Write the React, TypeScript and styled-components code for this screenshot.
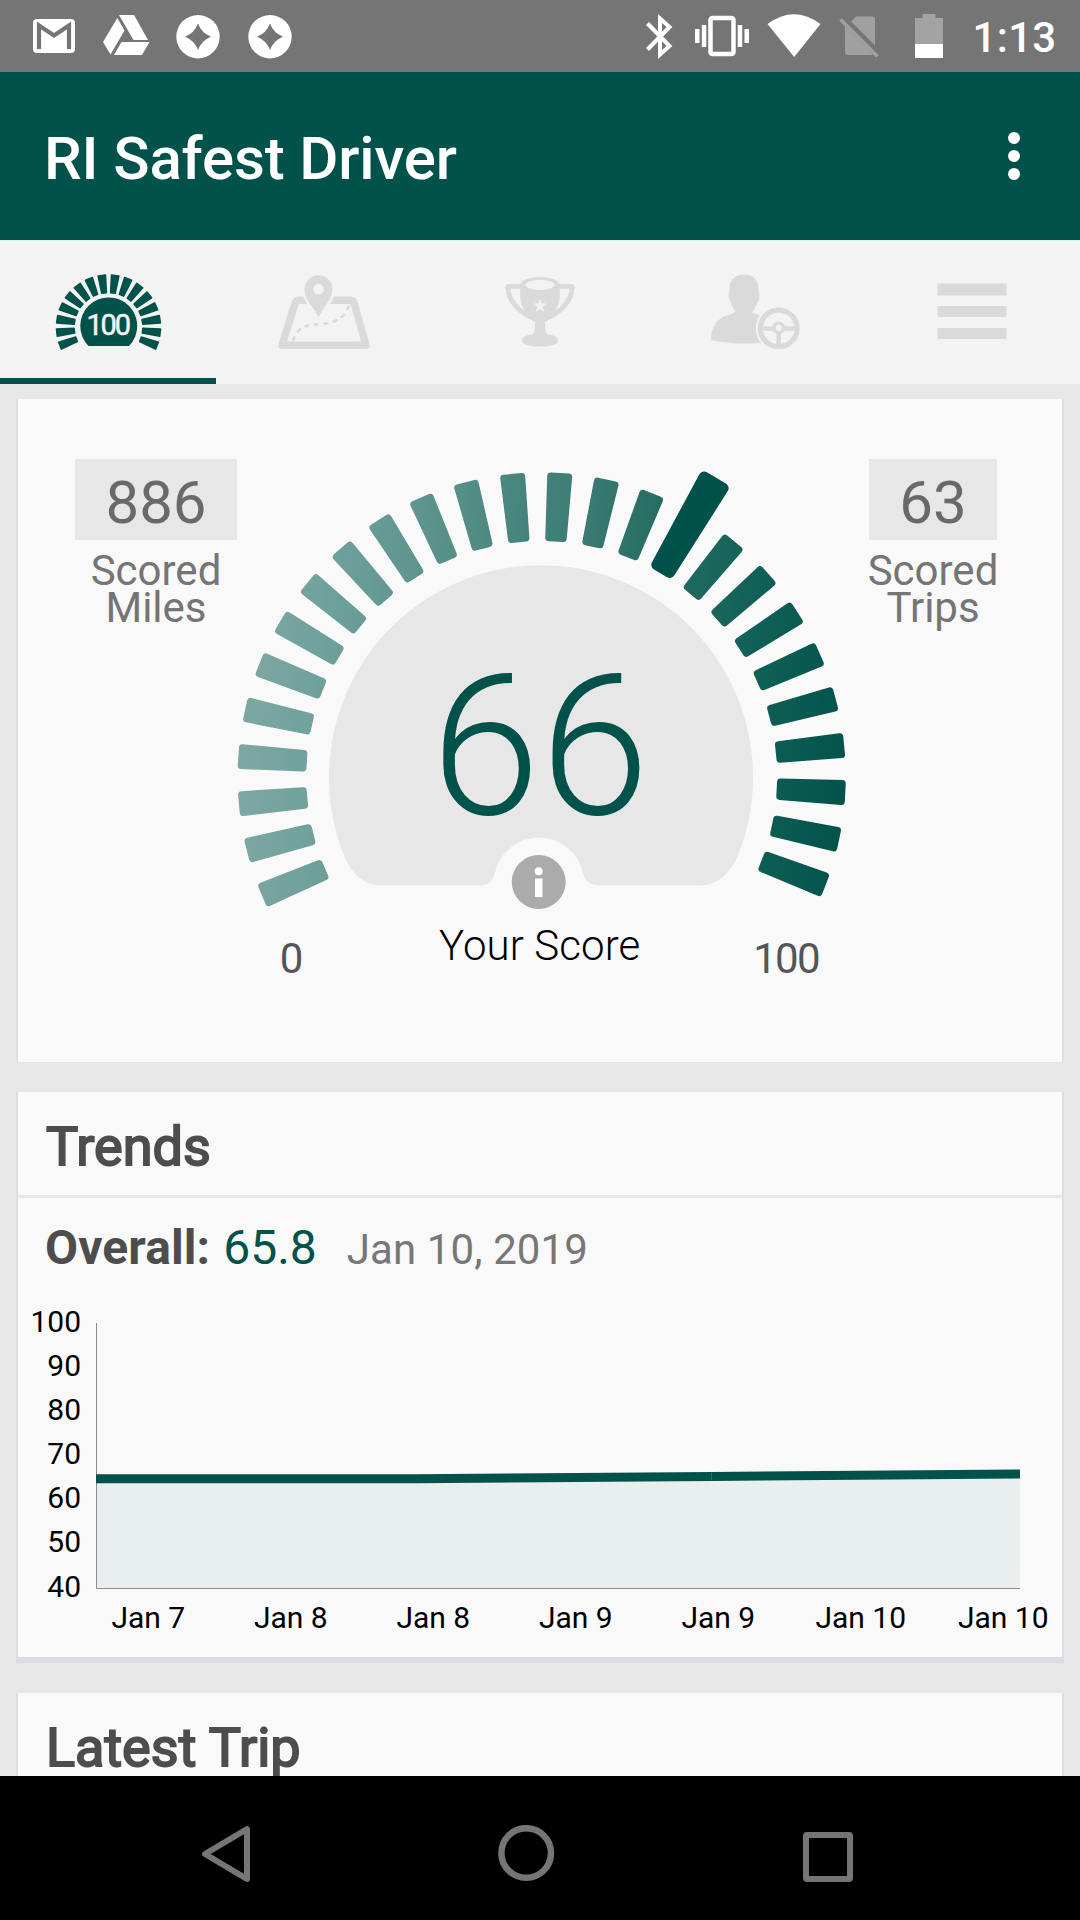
import React from "react";
import styled, { createGlobalStyle } from "styled-components";

const TEAL = "#00524a";
const MUTED = "#dadada";

const GlobalStyle = createGlobalStyle`
  * { box-sizing: border-box; }
  body { margin: 0; background: #e7e7e7; }
`;

const Screen = styled.div`
  width: 1080px;
  height: 1920px;
  display: flex;
  flex-direction: column;
  overflow: hidden;
  background: #e7e7e7;
  font-family: Roboto, "Liberation Sans", sans-serif;
`;

const StatusBar = styled.header`
  flex: none;
  height: 72px;
  display: flex;
  justify-content: space-between;
  background: #757575;
  color: #fff;
`;

const StatusGroup = styled.div<{ $side: "left" | "right" }>`
  display: flex;
  align-items: center;
  gap: ${(p) => (p.$side === "left" ? 24 : 18)}px;
  padding: ${(p) => (p.$side === "left" ? "0 0 0 30px" : "0 23.5px 0 0")};
`;

const Clock = styled.span`
  margin-left: 12px;
  padding-top: 3px;
  font-size: 42px;
  font-weight: 500;
  letter-spacing: 0.3px;
`;

const Glyph = styled.svg<{ $before?: number }>`
  display: block;
  flex: none;
  margin-left: ${(p) => p.$before ?? 0}px;
`;

const AppBar = styled.div`
  flex: none;
  height: 168px;
  display: flex;
  align-items: center;
  justify-content: space-between;
  padding: 0 60px 0 44px;
  background: ${TEAL};
`;

const AppTitle = styled.h1`
  margin: 0;
  padding-top: 5px;
  font-size: 60px;
  line-height: 70px;
  font-weight: 500;
  letter-spacing: -0.15px;
  color: #fff;
`;

const Overflow = styled.div`
  display: flex;
  flex-direction: column;
  gap: 6px;
`;

const Dot = styled.span`
  width: 12px;
  height: 12px;
  border-radius: 50%;
  background: #fff;
`;

const Tabs = styled.nav`
  flex: none;
  height: 144px;
  display: grid;
  grid-template-columns: repeat(5, 1fr);
  border-top: 1px solid #dff5f2;
  background: #f3f3f3;
`;

const Tab = styled.div<{ $active?: boolean }>`
  display: flex;
  border-bottom: 6px solid ${(p) => (p.$active ? TEAL : "transparent")};
`;

const Content = styled.main`
  flex: 1;
  min-height: 0;
  overflow: hidden;
  display: flex;
  flex-direction: column;
  gap: 30px;
  padding: 15px 18px 0;
`;

const Card = styled.section<{ $height: number; $ledge?: boolean }>`
  flex: none;
  height: ${(p) => p.$height}px;
  background: #f9f9f9;
  box-shadow: -2px 0 0 #dedee6, 2px 0 0 #dedee6
    ${(p) => (p.$ledge ? ", 0 6px 0 #dcdce4, -2px 6px 0 #dcdce4, 2px 6px 0 #dcdce4" : "")};
  margin-bottom: ${(p) => (p.$ledge ? 6 : 0)}px;
`;

const ScoreRow = styled.div`
  display: flex;
  justify-content: space-between;
  height: 100%;
  padding: 0 65px 0 57px;
`;

const Stat = styled.div<{ $width: number }>`
  flex: none;
  width: ${(p) => p.$width}px;
  padding-top: 60px;
  display: flex;
  flex-direction: column;
  align-items: center;
`;

const StatValue = styled.div`
  width: 100%;
  height: 81px;
  padding-top: 7px;
  display: flex;
  align-items: center;
  justify-content: center;
  background: #e7e7e7;
  color: #696969;
  font-size: 60px;
  line-height: 70px;
`;

const StatLabel = styled.div`
  width: 132px;
  margin-top: 12px;
  text-align: center;
  color: #757575;
  font-size: 42px;
  line-height: 37px;
`;

const CardTitle = styled.h2`
  margin: 0;
  height: 103px;
  padding: 5px 0 0 28px;
  display: flex;
  align-items: center;
  font-size: 54px;
  font-weight: 400;
  color: #4d4d4d;
  -webkit-text-stroke: 1.9px #4d4d4d;
`;

const TrendBody = styled.div`
  border-top: 3px solid #e7e7ea;
`;

const Summary = styled.div`
  display: flex;
  align-items: baseline;
  margin-top: 20px;
  height: 60px;
  padding-left: 27px;
  line-height: 60px;
`;

const SummaryLabel = styled.span`
  font-size: 48px;
  font-weight: 700;
  letter-spacing: 0.1px;
  color: #4d4d4d;
`;

const SummaryValue = styled.span`
  margin-left: 13px;
  font-size: 48px;
  color: ${TEAL};
`;

const SummaryDate = styled.span`
  margin-left: 30px;
  font-size: 42px;
  letter-spacing: 0.1px;
  color: #777;
`;

const Chart = styled.div`
  display: grid;
  grid-template-columns: 63px 1fr;
  column-gap: 15px;
  margin-top: 22px;
  font-size: 30px;
  color: #000;
`;

const YAxis = styled.div`
  display: flex;
  flex-direction: column;
  text-align: right;
  line-height: 44.1px;
`;

const Plot = styled.svg`
  display: block;
  margin-top: 23px;
`;

const XAxis = styled.div`
  grid-column: 1 / -1;
  display: grid;
  grid-template-columns: repeat(7, 142.5px);
  margin: -8.3px 0 0 59px;
  text-align: center;
  line-height: 36px;
`;

const NavBar = styled.footer`
  flex: none;
  height: 144px;
  display: flex;
  align-items: center;
  justify-content: space-between;
  padding: 14px 224px 0 199px;
  background: #000;
`;

const polar = (cx: number, cy: number, r: number, deg: number, offset: number) => {
  const a = (deg * Math.PI) / 180;
  const x = cx + r * Math.sin(a) + offset * Math.cos(a);
  const y = cy - r * Math.cos(a) + offset * Math.sin(a);
  return `${x.toFixed(2)},${y.toFixed(2)}`;
};

type BarProps = {
  cx: number;
  cy: number;
  angle: number;
  inner: number;
  outer: number;
  innerWidth: number;
  outerWidth: number;
  round: number;
  paint: string;
};

function Bar({ cx, cy, angle, inner, outer, innerWidth, outerWidth, round, paint }: BarProps) {
  const inset = round / 2;
  const wi = innerWidth / 2 - inset;
  const wo = outerWidth / 2 - inset;
  const points = [
    polar(cx, cy, inner + inset, angle, -wi),
    polar(cx, cy, outer - inset, angle, -wo),
    polar(cx, cy, outer - inset, angle, wo),
    polar(cx, cy, inner + inset, angle, wi),
  ].join(" ");
  return <polygon points={points} fill={paint} stroke={paint} strokeWidth={round} strokeLinejoin="round" />;
}

const BAR_COUNT = 26;
const SCORE_BAR = 16;

function Gauge() {
  return (
    <Glyph width="632" height="663" viewBox="237 399 632 663">
      <defs>
        <linearGradient id="sweep" gradientUnits="userSpaceOnUse" x1="238" y1="760" x2="848" y2="800">
          <stop offset="0" stopColor="#7ea7a4" />
          <stop offset="0.13" stopColor="#6fa19b" />
          <stop offset="0.3" stopColor="#5a928b" />
          <stop offset="0.45" stopColor="#44837b" />
          <stop offset="0.53" stopColor="#3c7c74" />
          <stop offset="0.66" stopColor="#266d63" />
          <stop offset="0.8" stopColor="#14635a" />
          <stop offset="1" stopColor="#00524a" />
        </linearGradient>
      </defs>
      {Array.from({ length: BAR_COUNT }, (_, i) => {
        const big = i === SCORE_BAR;
        return (
          <Bar
            key={i}
            cx={541.7}
            cy={776.5}
            angle={-113.1 + i * 8.964}
            inner={235.3}
            outer={big ? 346 : 304}
            innerWidth={big ? 26 : 21.5}
            outerWidth={big ? 33 : 25}
            round={big ? 11 : 7}
            paint={big ? TEAL : "url(#sweep)"}
          />
        );
      })}
      <path
        fill="#e7e7e7"
        d="M345 858 A212 212 0 1 1 737 858 C729 874 717 885 701 885.3 H597 Q586 885 583 873 A45 45 0 0 0 495 873 Q492 885 482 885.3 H380 C364 885 353 875 345 858Z"
      />
      <circle cx="538.7" cy="882" r="27" fill="#ababab" />
      <circle cx="538.7" cy="871.2" r="4" fill="#fff" />
      <rect x="535" y="878.5" width="7.5" height="18.5" fill="#fff" />
      <text x="540" y="813.5" textAnchor="middle" fontSize="197" fontWeight="300" fill={TEAL}>66</text>
      <text x="539.7" y="959.5" textAnchor="middle" fontSize="42" letterSpacing="0.1" fontWeight="300" fill="#000">Your Score</text>
      <text x="291.5" y="973" textAnchor="middle" fontSize="42" fill="#555">0</text>
      <text x="786" y="973" textAnchor="middle" fontSize="42" fill="#555" letterSpacing="-1.8">100</text>
    </Glyph>
  );
}

function ScoreTabIcon() {
  return (
    <Glyph width="216" height="137" viewBox="0 241 216 137">
      {Array.from({ length: 16 }, (_, i) => (
        <Bar
          key={i}
          cx={108.5}
          cy={327}
          angle={-111 + i * 14.8}
          inner={33.5}
          outer={52.7}
          innerWidth={6.2}
          outerWidth={9}
          round={1.6}
          paint={TEAL}
        />
      ))}
      <path fill={TEAL} d="M88.5 346 A28.5 28.5 0 1 1 129 346Z" />
      <text x="107.6" y="335.3" textAnchor="middle" fontSize="29" letterSpacing="-2.2" fill="#f3f3f3" stroke="#f3f3f3" strokeWidth="0.5">100</text>
    </Glyph>
  );
}

function MapTabIcon() {
  return (
    <Glyph width="216" height="137" viewBox="216 240.2 216 137">
      <path d="M299.5 299.5 H350.5 Q353 299.5 354 302 L366 344.5 H282 L295 302.5 Q296 299.5 299.5 299.5Z" fill="none" stroke={MUTED} strokeWidth="7.5" strokeLinejoin="round" />
      <path d="M293 340 C297 325 309 323.5 322 323 S347 316 349 303" fill="none" stroke={MUTED} strokeWidth="2.6" strokeDasharray="5 4.5" />
      <path d="M318.5 317 C315 307 304.5 300 304.5 288.5 A14 14 0 0 1 332.5 288.5 C332.5 300 322 307 318.5 317Z" fill={MUTED} stroke="#f3f3f3" strokeWidth="5" paintOrder="stroke" />
      <circle cx="318.5" cy="288.5" r="5.2" fill="#f3f3f3" />
    </Glyph>
  );
}

function TrophyTabIcon() {
  return (
    <Glyph width="216" height="137" viewBox="432 240.6 216 137">
      <g fill="none" stroke={MUTED} strokeWidth="4.8" strokeLinejoin="round">
        <path d="M522 286 H508 C507 300 520 313 536 319" />
        <path d="M558 286 H572 C573 300 560 313 544 319" />
      </g>
      <path fill={MUTED} d="M520.5 284 C522 274.5 558 274.5 559.5 284 C561 301 558 311 549 316 Q545 319 545 325 Q545 332 548 334 Q558 335 558 340 C558 348 522 348 522 340 Q522 335 532 334 Q535 332 535 325 Q535 319 531 316 C522 311 519 301 520.5 284Z" />
      <ellipse cx="540" cy="284.5" rx="14.5" ry="5.2" fill="#f3f3f3" />
      <path fill="#f3f3f3" d="M540 298 L541.7 303 H546 L542.7 306.5 L544.3 311.5 L540 308.5 L535.7 311.5 L537.3 306.5 L534 303 H538.3Z" />
    </Glyph>
  );
}

function DriverTabIcon() {
  return (
    <Glyph width="216" height="137" viewBox="648 240.6 216 137">
      <path fill={MUTED} d="M744 274 C753 274 758.5 280 758.5 288 Q758.5 291 759.5 294 Q759.5 300 757 303 Q755 309 751.5 312 Q762 315 768 319 V342 Q742 345 711 340 C711 326 717 318 727 315 Q734 313 735.5 311 Q732 307 731 302 Q728 299 728.5 294 Q729.5 291 729.5 287 C730 279 736 274 744 274Z" />
      <circle cx="778.7" cy="328" r="23" fill="#f3f3f3" />
      <g fill="none" stroke={MUTED}>
        <circle cx="778.7" cy="328" r="18.3" strokeWidth="5.2" />
        <path d="M761 328 H773 M784.5 328 H797 M778.7 333 V346" strokeWidth="4.5" />
        <circle cx="778.7" cy="327.5" r="4.8" strokeWidth="3.5" />
      </g>
    </Glyph>
  );
}

function MenuTabIcon() {
  return (
    <Glyph width="216" height="137" viewBox="864 241 216 137" fill={MUTED}>
      <rect x="937.5" y="283.5" width="69" height="12" />
      <rect x="937.5" y="306" width="69" height="11" />
      <rect x="937.5" y="328" width="69" height="11" />
    </Glyph>
  );
}

function StarBadge() {
  return (
    <Glyph width="48" height="72" viewBox="174.5 0 48 72">
      <circle cx="198.5" cy="36.7" r="21.7" fill="#fff" />
      <path fill="#757575" d="M198.5 23.5 Q202 33 211.5 36.7 Q202 40.5 198.5 50 Q195 40.5 185.5 36.7 Q195 33 198.5 23.5Z" />
    </Glyph>
  );
}

const LEVELS = [100, 90, 80, 70, 60, 50, 40];
const DAYS = ["Jan 7", "Jan 8", "Jan 8", "Jan 9", "Jan 9", "Jan 10", "Jan 10"];

export default function App() {
  return (
    <Screen>
      <GlobalStyle />
      <StatusBar>
        <StatusGroup $side="left">
          <Glyph width="48" height="72" viewBox="30 0 48 72">
            <rect x="33" y="19" width="42" height="34" rx="4" fill="#fff" />
            <path d="M39 49 V25.5 L54 35.5 L69 25.5 V49" fill="none" stroke="#757575" strokeWidth="4.2" />
          </Glyph>
          <Glyph width="48" height="72" viewBox="102 0 48 72" fill="#fff">
            <path d="M119 15 H134 L148 40 H133.5Z" />
            <path d="M117.3 18 L124.5 30.5 L110.5 54.5 L103 42Z" />
            <path d="M121.5 42 H149.5 L142 55 H114Z" />
          </Glyph>
          <StarBadge />
          <StarBadge />
        </StatusGroup>
        <StatusGroup $side="right">
          <Glyph width="29" height="72" viewBox="645 0 29 72">
            <path d="M647.5 23.5 L669.5 46 L660 54.5 V18.5 L669.5 27 L647.5 49.5" fill="none" stroke="#fff" strokeWidth="4" />
          </Glyph>
          <Glyph $before={3} width="54" height="72" viewBox="695 0 54 72" fill="#fff">
            <rect x="695" y="29" width="4.5" height="14" />
            <rect x="701.8" y="25" width="4.5" height="22" />
            <rect x="710.5" y="18" width="23" height="36" rx="2" fill="none" stroke="#fff" strokeWidth="4.5" />
            <rect x="737.7" y="25" width="4.5" height="22" />
            <rect x="744.5" y="29" width="4.5" height="14" />
          </Glyph>
          <Glyph width="54" height="72" viewBox="766.5 0 54 72" fill="#fff">
            <path d="M767 24 Q793.5 4.5 820 24 L793.7 57Z" />
          </Glyph>
          <Glyph width="40" height="72" viewBox="838 0 40 72" fill="#a0a0a0">
            <path d="M855 16.5 H871 Q874 16.5 874 19.5 V45.5 L850 21.5Z" />
            <path d="M844 26.5 L872 54.5 L871 55 H847 Q844 55 844 52Z" />
            <path d="M839.5 19.5 L876.5 56.5" stroke="#a0a0a0" strokeWidth="3.8" />
          </Glyph>
          <Glyph $before={18} width="28" height="72" viewBox="914 0 28 72">
            <path d="M914 18 H921.5 V14 H934.5 V18 H942 V44 H914Z" fill="#a3a3a3" />
            <rect x="914" y="44" width="28" height="14" fill="#fff" />
          </Glyph>
          <Clock>1:13</Clock>
        </StatusGroup>
      </StatusBar>

      <AppBar>
        <AppTitle>RI Safest Driver</AppTitle>
        <Overflow>
          <Dot />
          <Dot />
          <Dot />
        </Overflow>
      </AppBar>

      <Tabs>
        <Tab $active><ScoreTabIcon /></Tab>
        <Tab><MapTabIcon /></Tab>
        <Tab><TrophyTabIcon /></Tab>
        <Tab><DriverTabIcon /></Tab>
        <Tab><MenuTabIcon /></Tab>
      </Tabs>

      <Content>
        <Card $height={663}>
          <ScoreRow>
            <Stat $width={162}>
              <StatValue>886</StatValue>
              <StatLabel>Scored Miles</StatLabel>
            </Stat>
            <Gauge />
            <Stat $width={128}>
              <StatValue>63</StatValue>
              <StatLabel>Scored Trips</StatLabel>
            </Stat>
          </ScoreRow>
        </Card>

        <Card $height={565} $ledge>
          <CardTitle>Trends</CardTitle>
          <TrendBody>
            <Summary>
              <SummaryLabel>Overall:</SummaryLabel>
              <SummaryValue>65.8</SummaryValue>
              <SummaryDate>Jan 10, 2019</SummaryDate>
            </Summary>
            <Chart>
              <YAxis>
                {LEVELS.map((n) => (
                  <span key={n}>{n}</span>
                ))}
              </YAxis>
              <Plot width="924" height="266" viewBox="0 0 924 266">
                <path d="M0 156 H320 L616 153.5 L924 151.5 V265 H0Z" fill="#e8efee" />
                <path d="M0.5 0 V265.5 H924" fill="none" stroke="#8c8c8c" strokeWidth="1" />
                <path d="M0 155.8 H320 L616 153.5 L924 151" fill="none" stroke={TEAL} strokeWidth="9" />
                <path d="M615.5 149.5 V157.500" stroke="#2c6d66" strokeWidth="1" />
              </Plot>
              <XAxis>
                {DAYS.map((d, i) => (
                  <span key={i}>{d}</span>
                ))}
              </XAxis>
            </Chart>
          </TrendBody>
        </Card>

        <Card $height={300}>
          <CardTitle>Latest Trip</CardTitle>
        </Card>
      </Content>

      <NavBar>
        <Glyph width="54" height="60" viewBox="199 1826 54 60">
          <path d="M205 1855 L247 1830 V1880Z" fill="none" stroke="#757575" strokeWidth="6" strokeLinejoin="round" />
        </Glyph>
        <Glyph width="60" height="60" viewBox="496.5 1825 60 60">
          <circle cx="525.7" cy="1853" r="24.8" fill="none" stroke="#757575" strokeWidth="6.5" />
        </Glyph>
        <Glyph width="56" height="60" viewBox="800 1825 56 60">
          <rect x="806" y="1835" width="44" height="44" rx="1" fill="none" stroke="#757575" strokeWidth="6" strokeLinejoin="round" />
        </Glyph>
      </NavBar>
    </Screen>
  );
}
